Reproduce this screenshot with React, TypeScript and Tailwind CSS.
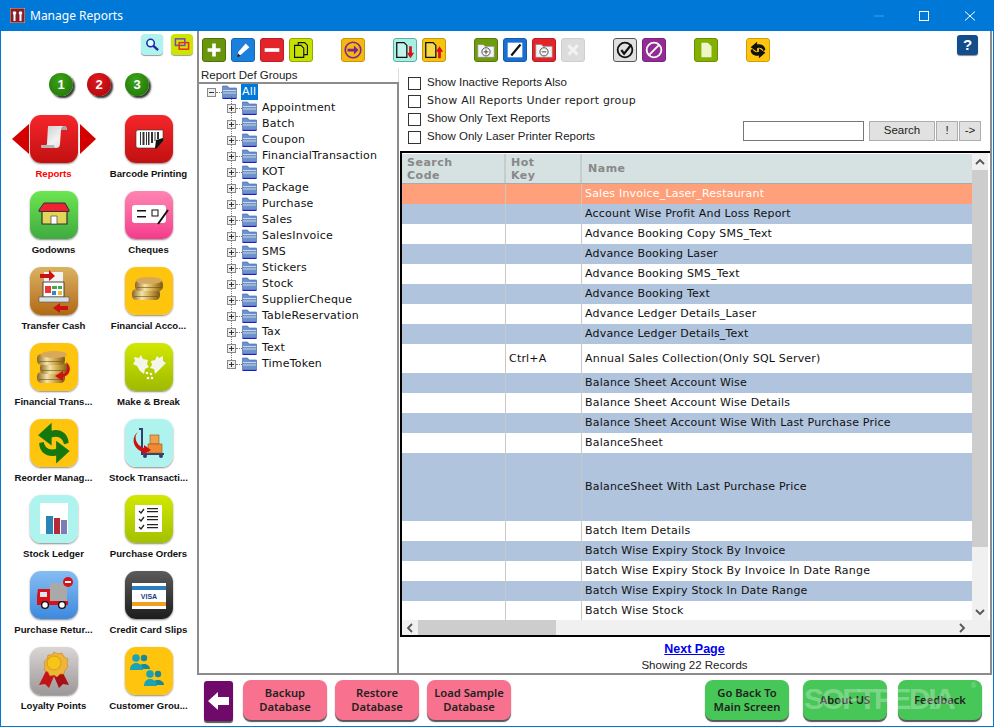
import type { ReactNode } from 'react'

const Ico = ({ children, box = 48 }: { children: ReactNode; box?: number }) => (
  <svg viewBox={`0 0 ${box} ${box}`} className="w-full h-full block">
    {children}
  </svg>
)

const Coins = ({ y = 0, n = 2 }: { y?: number; n?: number }) => (
  <g>
    <defs>
      <linearGradient id="gold" x1="0" x2="1" y1="0" y2="0">
        <stop offset="0" stopColor="#8a6520" />
        <stop offset=".35" stopColor="#f5e3a8" />
        <stop offset=".7" stopColor="#c39a3c" />
        <stop offset="1" stopColor="#7a5818" />
      </linearGradient>
    </defs>
    {Array.from({ length: n }).map((_, i) => {
      const top = y + (n - 1 - i) * 9
      return (
        <g key={i}>
          <rect x={i % 2 ? 11 : 8} y={top + 3} width="28" height="11" rx="4.500" fill="url(#gold)" />
          <rect x={i % 2 ? 13 : 10} y={top + 10} width="24" height="1" fill="#6e4f14" opacity=".6" />
        </g>
      )
    })}
    <ellipse cx="25" cy={y + 3.500} rx="13" ry="3.500" fill="#d9a95a" />
  </g>
)

const People = ({ x, y }: { x: number; y: number }) => (
  <g transform={`translate(${x} ${y})`} fill="#1aa3b5">
    <circle cx="14" cy="4" r="3.200" fill="#158a9c" />
    <path d="M9 15c0-4 2-5 5-5s6 2 6 5z" fill="#158a9c" />
    <circle cx="6" cy="4" r="3.800" />
    <path d="M0 16c0-5 3-7 6-7s7 2 7 7z" />
  </g>
)

const icons: Record<string, ReactNode> = {
  reports: (
    <Ico>
      <defs>
        <linearGradient id="paper" x1="0" x2="1" y1="0" y2="1">
          <stop offset="0" stopColor="#c8c8c8" />
          <stop offset=".6" stopColor="#f2f2f2" />
          <stop offset="1" stopColor="#d8d8d8" />
        </linearGradient>
      </defs>
      <path d="M18 11h16c2 0 3 2 3 4h-6l-1 14c0 3-2 4-4 4H13c-2 0-2-2-2-3h5c1 0 1-1 1-2z" fill="url(#paper)" />
      <path d="M31 15h6c0-2-1-4-3-4s-3 2-3 4z" fill="#a5a5a5" />
      <path d="M11 30h13c0 1 1 3 2 3H13c-2 0-2-2-2-3z" fill="#b5b5b5" />
    </Ico>
  ),
  barcode: (
    <Ico>
      <path d="M13 15h25v11l-7 7H13a2 2 0 0 1-2-2V17a2 2 0 0 1 2-2z" fill="#fff" stroke="#333" strokeWidth=".6" />
      <path d="M15 17h1v13h-1zM17.500 17h2v13h-2zM21 17h1v13h-1zM23 17h1.500v13H23zM26 17h2v11h-2zM29.500 17h1v9h-1zM32 17h2v7h-2z" fill="#333" />
      <path d="M38 23v3l-7 8-1-1 1-8z" fill="#111" />
    </Ico>
  ),
  godowns: (
    <Ico>
      <path d="M12 20h25v13H12z" fill="#e3d45a" stroke="#333" strokeWidth="1.200" />
      <path d="M14 12h21l4 7v1.500H9V19z" fill="#ee2233" stroke="#333" strokeWidth="1" />
      <path d="M21 25h6v8h-6z" fill="#fff" stroke="#555" strokeWidth=".8" />
    </Ico>
  ),
  cheques: (
    <Ico>
      <rect x="7" y="14" width="34" height="18" rx="3" fill="#fff" />
      <path d="M12 19h9v1.400h-9zM12 25h9v1.400h-9z" fill="#111" />
      <rect x="27" y="19" width="6" height="6" fill="#fff" stroke="#111" />
      <path d="M33 33l10-14" stroke="#111" strokeWidth="2" />
    </Ico>
  ),
  transfer: (
    <Ico>
      <path d="M14 5h19v27H14z" fill="#f3f3f3" />
      <path d="M13 15h21v15H13z" fill="#fff" stroke="#444" />
      <rect x="15" y="19" width="6" height="7" fill="#e33" />
      <rect x="22" y="19" width="5" height="3" fill="#4a4" />
      <rect x="28" y="19" width="4" height="3" fill="#4a4" />
      <rect x="22" y="24" width="4" height="4" fill="#38c" />
      <rect x="28" y="24" width="4" height="4" fill="#eb3" />
      <rect x="9" y="30" width="30" height="5" fill="#d8e2e6" stroke="#555" strokeWidth=".6" />
      <path d="M10 7h9V3l6 6-6 5v-3h-9z" fill="#c11" />
      <path d="M38 39h-8v-3l-7 5 7 5v-3h8z" fill="#c11" />
    </Ico>
  ),
  finacc: (
    <Ico>
      <g transform="translate(-1 10)">
        <Coins n={2} />
      </g>
    </Ico>
  ),
  fintrans: (
    <Ico>
      <g transform="translate(-1 8)">
        <Coins n={3} />
      </g>
      <path d="M36 19c6 4 5 13-3 15v4l-8-5 8-5v3c4-1 5-7 3-12z" fill="#c11" />
    </Ico>
  ),
  makebreak: (
    <Ico>
      <path d="M9 14l5 1 2-3 2 4 5 1-1 4 2 3-4 2-1 5-4-3-3-5-4-2 2-3z" fill="#f4f6ea" />
      <path d="M38 13l-4 2-2-2-2 4-4 1 1 4-2 3 4 1 1 5 4-4 4-4 3-3-3-2z" fill="#f4f6ea" />
      <circle cx="22" cy="30" r="1.300" fill="#fff" />
      <circle cx="26" cy="31" r="1.300" fill="#fff" />
      <circle cx="23" cy="35" r="1.300" fill="#fff" />
      <circle cx="27" cy="35" r="1.300" fill="#fff" />
    </Ico>
  ),
  reorder: (
    <Ico>
      <g transform="translate(48 0) scale(-1 1) translate(-3 -3) scale(1.130)">
        <path d="M11 24c0-9 8-13 15-11V6l12 11-12 9v-7c-6-2-10 1-11 6z" fill="#14780f" />
        <path d="M37 24c0 9-8 13-15 11v7L10 31l12-9v7c6 2 10-1 11-6z" fill="#14780f" />
      </g>
    </Ico>
  ),
  stocktrans: (
    <Ico>
      <path d="M14 10h3v25h22" stroke="#33406e" strokeWidth="2" fill="none" />
      <rect x="25" y="16" width="9" height="9" fill="#f0a24a" stroke="#8a5a22" strokeWidth=".6" />
      <rect x="23" y="25" width="14" height="9" fill="#ee8a33" stroke="#8a5a22" strokeWidth=".6" />
      <circle cx="20" cy="37" r="2" fill="#33406e" />
      <circle cx="36" cy="37" r="2" fill="#33406e" />
      <path d="M14 12c-6 4-4 14 5 17v-3l7 5-8 5v-3C8 30 5 18 14 12z" fill="#c11" />
    </Ico>
  ),
  ledger: (
    <Ico>
      <rect x="10" y="8" width="28" height="31" fill="#fff" />
      <rect x="16" y="21" width="7" height="18" fill="#2a82b5" />
      <rect x="24" y="23" width="6" height="16" fill="#b52a35" />
      <rect x="31" y="25" width="6" height="14" fill="#7d7db5" />
    </Ico>
  ),
  orders: (
    <Ico>
      <rect x="10" y="10" width="27" height="27" fill="#fff" />
      <path d="M22 13h11v1.300H22zM22 16h11v1.300H22zM22 21h11v1.300H22zM22 24h11v1.300H22zM22 29h11v1.300H22zM22 32h11v1.300H22z" fill="#222" />
      <path d="M14 16l2 2 3-4M14 24l2 2 3-4M14 32l2 2 3-4" stroke="#222" strokeWidth="1.300" fill="none" />
    </Ico>
  ),
  returns: (
    <Ico>
      <path d="M20 12h17v18H20z" fill="#a9a9a9" />
      <path d="M8 18h12v16H7v-9z" fill="#d8101a" />
      <path d="M10 21h7v5h-7z" fill="#dfe6ee" />
      <path d="M7 30h31v4H7z" fill="#d8101a" />
      <circle cx="15" cy="34" r="3.400" fill="#fff" stroke="#111" strokeWidth="1.400" />
      <circle cx="32" cy="34" r="3.400" fill="#fff" stroke="#111" strokeWidth="1.400" />
      <circle cx="38" cy="11" r="5" fill="#d8101a" />
      <rect x="35" y="10" width="6" height="2" fill="#fff" />
    </Ico>
  ),
  credit: (
    <Ico>
      <rect x="7" y="12" width="34" height="26" fill="#fff" />
      <rect x="7" y="15" width="34" height="4" fill="#2a7ec0" />
      <rect x="7" y="31" width="34" height="4" fill="#f0a020" />
      <text x="24" y="28" textAnchor="middle" fontSize="7" fontWeight="700" fontFamily="Liberation Sans, sans-serif" fill="#1a3a8a">
        VISA
      </text>
    </Ico>
  ),
  loyalty: (
    <Ico>
      <path d="M17 22L9 38l6-1 4 4 6-14z" fill="#c4141a" />
      <path d="M31 22l8 16-6-1-4 4-6-14z" fill="#a81015" />
      <path d="M24 5l4 2 4-1 2 4 4 2-1 4 1 4-3 3-1 4-4 0-3 3-3-2-4 1-2-4-4-2 1-4-1-4 3-3 1-4 4 0z" fill="#f0b438" stroke="#c5871a" strokeWidth=".6" />
      <circle cx="24" cy="16" r="7" fill="#f5c518" stroke="#d89a1c" />
    </Ico>
  ),
  groups: (
    <Ico>
      <People x={5} y={7} />
      <People x={19} y={23} />
    </Ico>
  ),
}

const tiles = [
  { label: 'Reports', icon: 'reports', bg: 'from-[#f5262b] to-[#c20f0f]', active: true },
  { label: 'Barcode Printing', icon: 'barcode', bg: 'from-[#f5262b] to-[#c20f0f]' },
  { label: 'Godowns', icon: 'godowns', bg: 'from-[#6ce64f] to-[#3fab40]' },
  { label: 'Cheques', icon: 'cheques', bg: 'from-[#ff84b2] to-[#f43a8c]' },
  { label: 'Transfer Cash', icon: 'transfer', bg: 'from-[#d9b361] to-[#b2690f]' },
  { label: 'Financial Acco...', icon: 'finacc', bg: 'from-[#ffc40d] to-[#ffc40d]' },
  { label: 'Financial Trans...', icon: 'fintrans', bg: 'from-[#ffc40d] to-[#ffc40d]' },
  { label: 'Make & Break', icon: 'makebreak', bg: 'from-[#d2e800] to-[#9dba00]' },
  { label: 'Reorder Manag...', icon: 'reorder', bg: 'from-[#ffc40d] to-[#ffc40d]' },
  { label: 'Stock Transacti...', icon: 'stocktrans', bg: 'from-[#aff3ee] to-[#aff3ee]' },
  { label: 'Stock Ledger', icon: 'ledger', bg: 'from-[#aff3ee] to-[#aff3ee]' },
  { label: 'Purchase Orders', icon: 'orders', bg: 'from-[#d2e800] to-[#a3c000]' },
  { label: 'Purchase Retur...', icon: 'returns', bg: 'from-[#85bdf3] to-[#3d89dd]' },
  { label: 'Credit Card Slips', icon: 'credit', bg: 'from-[#5c5c5c] to-[#1d1d1d]' },
  { label: 'Loyalty Points', icon: 'loyalty', bg: 'from-[#dad6d6] to-[#9d9797]' },
  { label: 'Customer Grou...', icon: 'groups', bg: 'from-[#ffc40d] to-[#ffc40d]' },
]

function Sidebar() {
  return (
    <div className="w-[196px] shrink-0 pt-[3px]">
      <div className="flex justify-end gap-[8px] pr-[4px] h-[21px]">
        <div className="w-[22px] h-[21px] rounded-[4px] bg-[#aff3ee] shadow-[0_1px_1px_#999] p-[3px]">
          <Ico box={16}>
            <circle cx="6.500" cy="6.500" r="4" fill="#dff" stroke="#2222aa" strokeWidth="1.600" />
            <path d="M9.500 9.500l5 4.500" stroke="#2222aa" strokeWidth="2.400" />
          </Ico>
        </div>
        <div className="w-[22px] h-[21px] rounded-[4px] bg-[#cfe500] shadow-[0_1px_1px_#999] p-[3px]">
          <Ico box={16}>
            <rect x="1" y="2" width="10" height="7" fill="none" stroke="#6a4bc4" strokeWidth="1.600" />
            <rect x="5" y="6" width="10" height="7" fill="none" stroke="#ee2a1a" strokeWidth="1.600" />
          </Ico>
        </div>
      </div>
      <div className="flex justify-center gap-[14px] mt-[18px] h-[24px]">
        {['1', '2', '3'].map((n, i) => (
          <div
            key={n}
            className={`w-[24px] h-[23px] rounded-full flex items-center justify-center text-white text-[13px] font-bold shadow-[2px_2px_2px_#333] font-['Liberation_Sans',sans-serif] bg-radial-[at_45%_30%] ${
              i === 1 ? 'from-[#e01a20] to-[#a80408]' : 'from-[#3da31a] to-[#1d7005]'
            }`}
          >
            {n}
          </div>
        ))}
      </div>
      <div className="grid grid-cols-[95px_95px] pl-[5px] mt-[18px] auto-rows-[76px]">
        {tiles.map(t => (
          <div key={t.label} className="relative flex flex-col items-center">
            <div
              className={`w-[48px] h-[48px] rounded-[11px] bg-gradient-to-b overflow-hidden shadow-[0_1px_2px_#888] ${t.bg}`}
            >
              {icons[t.icon]}
            </div>
            {t.active && (
              <>
                <div className="absolute left-[6px] top-[9px] w-0 h-0 border-y-[15px] border-y-transparent border-r-[17px] border-r-[#d40000]" />
                <div className="absolute left-[74px] top-[9px] w-0 h-0 border-y-[15px] border-y-transparent border-l-[16px] border-l-[#d40000]" />
              </>
            )}
            <div
              className={`mt-[4px] text-[9.600px] leading-[13px] font-bold whitespace-nowrap font-['Liberation_Sans',sans-serif] ${
                t.active ? 'text-[#ff0000]' : 'text-[#111]'
              }`}
            >
              {t.label}
            </div>
          </div>
        ))}
      </div>
    </div>
  )
}

const Tool = ({ bg, children, gap }: { bg: string; children: ReactNode; gap?: boolean }) => (
  <div className={`w-[24px] h-[24px] rounded-[3px] border overflow-hidden shrink-0 ${bg} ${gap ? 'ml-[28px]' : 'ml-[5px]'}`}>
    <Ico box={24}>{children}</Ico>
  </div>
)

const DocGlyph = ({ fill }: { fill: string }) => (
  <path d="M3 4h8l3 3v13H3z" fill={fill} stroke="#111" strokeWidth="1.400" />
)

const FolderGlyph = () => (
  <g>
    <path d="M3 6h6l2 2h10v12H3z" fill="#f4f4f4" stroke="#888" strokeWidth=".8" />
    <circle cx="12" cy="14" r="4.500" fill="none" stroke="#333" strokeWidth=".9" />
  </g>
)

function Toolbar() {
  return (
    <div className="h-[37px] flex items-start pt-[7px]">
      <Tool bg="bg-[#68950b] border-[#4d7206] !ml-[3px]">
        <path d="M10 5h4v5h5v4h-5v5h-4v-5H5v-4h5z" fill="#fff" />
      </Tool>
      <Tool bg="bg-[#1a80dc] border-[#1567b3]">
        <path d="M5 20l2-6 8-9 4 4-9 8z" fill="#fff" />
        <path d="M5 20l1.500-4.500 3 3z" fill="#222" />
      </Tool>
      <Tool bg="bg-[#e4242b] border-[#b91c22]">
        <rect x="4" y="10" width="16" height="4" fill="#fff" />
      </Tool>
      <Tool bg="bg-[#c6e000] border-[#93a800]">
        <path d="M9 4h7l3 3v10H9z" fill="none" stroke="#111" strokeWidth="1.200" />
        <path d="M5 7h7l3 3v10H5z" fill="#c6e000" stroke="#111" strokeWidth="1.200" />
      </Tool>
      <Tool gap bg="bg-[#f5b80f] border-[#c99708]">
        <circle cx="12" cy="12" r="8.500" fill="none" stroke="#7b2590" strokeWidth="1.800" />
        <path d="M6 10.500h7V7l5 5-5 5v-3.500H6z" fill="#7b2590" />
      </Tool>
      <Tool gap bg="bg-[#a8f0e4] border-[#5cb0a2]">
        <DocGlyph fill="#bff5ec" />
        <path d="M16.500 8h3v7h2.500l-4 6-4-6h2.500z" fill="#d8101a" />
      </Tool>
      <Tool bg="bg-[#f5c40f] border-[#c99708]">
        <DocGlyph fill="#f5d94a" />
        <path d="M16.500 21h3v-7h2.500l-4-6-4 6h2.500z" fill="#d8101a" />
      </Tool>
      <Tool gap bg="bg-[#6e9c0c] border-[#557a08]">
        <FolderGlyph />
        <path d="M9.500 14h5M12 11.500v5" stroke="#333" strokeWidth=".9" />
      </Tool>
      <Tool bg="bg-[#1a70d0] border-[#155cad]">
        <rect x="4" y="4" width="16" height="16" fill="#fff" />
        <path d="M8 18L18 6" stroke="#111" strokeWidth="2.400" />
      </Tool>
      <Tool bg="bg-[#e4242b] border-[#b91c22]">
        <FolderGlyph />
        <path d="M9.500 14h5" stroke="#333" strokeWidth=".9" />
      </Tool>
      <Tool bg="bg-[#dcdcdc] border-[#cfcfcf]">
        <path d="M7 7l10 10M17 7L7 17" stroke="#f2f2f2" strokeWidth="3.400" />
      </Tool>
      <Tool gap bg="bg-[#e0e0e0] border-[#555]">
        <circle cx="12" cy="12" r="8" fill="none" stroke="#111" strokeWidth="2" />
        <path d="M8 12l3 4 8-10" fill="none" stroke="#111" strokeWidth="2.400" />
      </Tool>
      <Tool bg="bg-[#932b94] border-[#7b2280]">
        <circle cx="12" cy="12" r="8" fill="none" stroke="#fff" strokeWidth="2" />
        <path d="M7 17L17 7" stroke="#fff" strokeWidth="2" />
      </Tool>
      <Tool gap bg="bg-[#84b000] border-[#6a8e00]">
        <path d="M7 4h7l4 4v12H7z" fill="#eef5c8" />
      </Tool>
      <Tool gap bg="bg-[#ffc40d] border-[#d09e08]">
        <g transform="translate(24 0) scale(-1 1)">
          <path d="M4 12c0-5 5-7 9-6V3l7 6-7 5v-4c-3-1-6 0-7 3z" fill="#111" />
          <path d="M20 12c0 5-5 7-9 6v3l-7-6 7-5v4c3 1 6 0 7-3z" fill="#111" />
        </g>
      </Tool>
      <div className="ml-[187px] -mt-[3px] w-[21px] h-[20px] rounded-[3px] bg-[#144d8c] shadow-[0_1px_1px_#888] flex items-center justify-center text-white text-[15px] font-bold font-['Liberation_Sans',sans-serif]">
        ?
      </div>
    </div>
  )
}

const groups = [
  'Appointment', 'Batch', 'Coupon', 'FinancialTransaction', 'KOT', 'Package', 'Purchase', 'Sales',
  'SalesInvoice', 'SMS', 'Stickers', 'Stock', 'SupplierCheque', 'TableReservation', 'Tax', 'Text', 'TimeToken',
]

const FolderIcon = () => (
  <svg viewBox="0 0 15 14" className="w-[15px] h-[14px] shrink-0">
    <path d="M0.500 1h5l1.500 2h7.500v10H0.500z" fill="#6f93c8" stroke="#3a5fa8" strokeWidth=".6" />
    <path d="M1 5.500h13M1 8h13" stroke="#c8d8ea" strokeWidth="1" />
    <path d="M0.500 13.500h14" stroke="#1a1ad0" strokeWidth="1" />
  </svg>
)

const Expander = ({ open }: { open?: boolean }) => (
  <div className="w-[9px] h-[9px] border border-[#8a8a8a] bg-[#eee] relative shrink-0 z-10">
    <div className="absolute left-[1px] top-[3px] w-[5px] h-px bg-[#333]" />
    {!open && <div className="absolute left-[3px] top-[1px] w-px h-[5px] bg-[#333]" />}
  </div>
)

function Tree() {
  return (
    <div className="w-[200px] shrink-0 flex flex-col">
      <div className="h-[14px] text-[11.500px] leading-[14px] pl-[2px] text-[#222] border-r border-[#ddd] font-['Liberation_Sans',sans-serif] whitespace-nowrap">
        Report Def Groups
      </div>
      <div className="flex-1 border-t-2 border-r-2 border-[#8c8c8c] font-['DejaVu_Sans',sans-serif] text-[11px] tracking-[0.2px] text-[#111]">
        <div className="flex items-center h-[16px] pl-[8px]">
          <Expander open />
          <div className="w-[6px] border-t border-dotted border-[#777]" />
          <FolderIcon />
          <div className="ml-[4px] px-[1px] h-[16px] w-[17px] bg-[#0078d7] text-white leading-[16px]">All</div>
        </div>
        <div className="relative">
          <div className="absolute left-[32px] -top-[4px] bottom-[8px] border-l border-dotted border-[#777]" />
          {groups.map(g => (
            <div key={g} className="relative flex items-center h-[16px] pl-[28px]">
              <Expander />
              <div className="w-[6px] border-t border-dotted border-[#777]" />
              <FolderIcon />
              <span className="ml-[5px] whitespace-nowrap">{g}</span>
            </div>
          ))}
        </div>
      </div>
    </div>
  )
}

const rows: { name: string; key?: string; h: string; bg: string; selected?: boolean }[] = [
  { name: 'Sales Invoice_Laser_Restaurant', h: 'h-[20px]', bg: 'bg-[#ffa07a]', selected: true },
  { name: 'Account Wise Profit And Loss Report', h: 'h-[20px]', bg: 'bg-[#b0c4de]' },
  { name: 'Advance Booking Copy SMS_Text', h: 'h-[20px]', bg: 'bg-white' },
  { name: 'Advance Booking Laser', h: 'h-[20px]', bg: 'bg-[#b0c4de]' },
  { name: 'Advance Booking SMS_Text', h: 'h-[20px]', bg: 'bg-white' },
  { name: 'Advance Booking Text', h: 'h-[20px]', bg: 'bg-[#b0c4de]' },
  { name: 'Advance Ledger Details_Laser', h: 'h-[20px]', bg: 'bg-white' },
  { name: 'Advance Ledger Details_Text', h: 'h-[20px]', bg: 'bg-[#b0c4de]' },
  { name: 'Annual Sales Collection(Only SQL Server)', key: 'Ctrl+A', h: 'h-[29px]', bg: 'bg-white' },
  { name: 'Balance Sheet Account Wise', h: 'h-[20px]', bg: 'bg-[#b0c4de]' },
  { name: 'Balance Sheet Account Wise Details', h: 'h-[20px]', bg: 'bg-white' },
  { name: 'Balance Sheet Account Wise With Last Purchase Price', h: 'h-[20px]', bg: 'bg-[#b0c4de]' },
  { name: 'BalanceSheet', h: 'h-[20px]', bg: 'bg-white' },
  { name: 'BalanceSheet With Last Purchase Price', h: 'h-[68px]', bg: 'bg-[#b0c4de]' },
  { name: 'Batch Item Details', h: 'h-[20px]', bg: 'bg-white' },
  { name: 'Batch Wise Expiry Stock By Invoice', h: 'h-[20px]', bg: 'bg-[#b0c4de]' },
  { name: 'Batch Wise Expiry Stock By Invoice In Date Range', h: 'h-[20px]', bg: 'bg-white' },
  { name: 'Batch Wise Expiry Stock In Date Range', h: 'h-[20px]', bg: 'bg-[#b0c4de]' },
  { name: 'Batch Wise Stock', h: 'h-[20px]', bg: 'bg-white' },
]

const Chevron = ({ d }: { d: string }) => (
  <svg viewBox="0 0 10 10" className="w-[10px] h-[10px]">
    <path d={d} fill="none" stroke="#555" strokeWidth="1.800" />
  </svg>
)

function ReportGrid() {
  return (
    <div className="ml-[1px] w-[590px] h-[486px] border-y-2 border-l-2 border-black bg-white flex flex-col font-['DejaVu_Sans',sans-serif] text-[11px] tracking-[0.2px] overflow-hidden">
      <div className="flex h-[467px] pr-[2px]">
        <div className="w-[570px] overflow-hidden bg-white pt-px">
          <div className="flex h-[30px] bg-[#d6e1e1] border-b border-[#aaa] text-[#888] font-bold leading-[13px] tracking-[0.5px]">
            <div className="w-[104px] pl-[5px] flex items-center border-r-2 border-[#c4cccc]">Search<br />Code</div>
            <div className="w-[76px] pl-[5px] flex items-center border-r-2 border-[#c4cccc]">Hot<br />Key</div>
            <div className="flex-1 pl-[6px] flex items-center">Name</div>
          </div>
          {rows.map(r => (
            <div key={r.name} className={`flex ${r.h} ${r.bg} ${r.selected ? 'text-white' : 'text-[#111]'}`}>
              <div className="w-[104px] border-r border-[#c8c8c8]" />
              <div className="w-[76px] pl-[3px] pt-px flex items-center border-r border-[#c8c8c8] whitespace-nowrap">{r.key}</div>
              <div className="flex-1 pl-[3px] pt-px flex items-center whitespace-nowrap">{r.name}</div>
            </div>
          ))}
        </div>
        <div className="flex-1 flex flex-col items-center bg-[#f0f0f0]">
          <div className="h-[17px] flex items-center"><Chevron d="M1 7l4-4 4 4" /></div>
          <div className="w-full h-[377px] bg-[#cdcdcd]" />
          <div className="flex-1" />
          <div className="h-[17px] flex items-center"><Chevron d="M1 3l4 4 4-4" /></div>
        </div>
      </div>
      <div className="h-[17px] flex items-center bg-[#f0f0f0]">
        <div className="w-[16px] flex justify-center"><Chevron d="M7 1L3 5l4 4" /></div>
        <div className="w-[138px] h-full bg-[#cdcdcd]" />
        <div className="flex-1" />
        <div className="w-[16px] flex justify-center mr-[20px]"><Chevron d="M3 1l4 4-4 4" /></div>
      </div>
    </div>
  )
}

function Options() {
  const opts = [
    { t: 'Show Inactive Reports Also', c: "font-['Liberation_Sans',sans-serif] text-[11.500px]" },
    { t: 'Show All Reports Under report group', c: "font-['DejaVu_Sans',sans-serif] text-[11px] tracking-[0.2px]" },
    { t: 'Show Only Text Reports', c: "font-['Liberation_Sans',sans-serif] text-[11.500px]" },
    { t: 'Show Only Laser Printer Reports', c: "font-['Liberation_Sans',sans-serif] text-[11.500px]" },
  ]
  return (
    <div className="flex justify-between h-[83px] pt-[6px] pl-[9px] pr-[9px]">
      <div>
        {opts.map(o => (
          <div key={o.t} className="flex items-center h-[18px] gap-[6px]">
            <div className="w-[13px] h-[13px] border border-[#333] bg-white" />
            <span className={`${o.c} text-[#222] whitespace-nowrap`}>{o.t}</span>
          </div>
        ))}
      </div>
      <div className="flex items-start pt-[47px] gap-[5px] font-['Liberation_Sans',sans-serif] text-[11.500px] text-[#222]">
        <div className="w-[121px] h-[20px] border border-[#777] bg-white" />
        <div className="flex gap-[1px]">
          <div className="w-[66px] h-[20px] border border-[#adadad] bg-[#e1e1e1] flex items-center justify-center">Search</div>
          <div className="w-[22px] h-[20px] border border-[#adadad] bg-[#e1e1e1] flex items-center justify-center">!</div>
          <div className="w-[22px] h-[20px] border border-[#adadad] bg-[#e1e1e1] flex items-center justify-center">-&gt;</div>
        </div>
      </div>
    </div>
  )
}

const PillBtn = ({ color, children }: { color: string; children: ReactNode }) => (
  <div
    className={`w-[84px] h-[40px] rounded-[8px] ${color} shadow-[0_2px_1px_#555] flex items-center justify-center text-center text-[11.200px] leading-[14px] font-semibold text-[#222] font-['Noto_Sans',sans-serif]`}
  >
    {children}
  </div>
)

function BottomBar() {
  return (
    <div className="relative h-[50px] flex items-start pt-[5px] pl-[7px]">
      <div className="w-[29px] h-[40px] rounded-[3px] bg-[#6f0a6b] shadow-[0_2px_1px_#555] mt-[1px] p-[4px] flex items-center">
        <svg viewBox="0 0 21 20" className="w-full">
          <path d="M0 10L10 1v5h11v8H10v5z" fill="#fff" />
        </svg>
      </div>
      <div className="flex gap-[8px] ml-[10px]">
        <PillBtn color="bg-[#f8728f]">Backup<br />Database</PillBtn>
        <PillBtn color="bg-[#f8728f]">Restore<br />Database</PillBtn>
        <PillBtn color="bg-[#f8728f]">Load Sample<br />Database</PillBtn>
      </div>
      <div className="flex ml-[194px]">
        <PillBtn color="bg-[#47c757]">Go Back To<br />Main Screen</PillBtn>
        <div className="ml-[14px]"><PillBtn color="bg-[#47c757]">About US</PillBtn></div>
        <div className="ml-[11px]"><PillBtn color="bg-[#47c757]">Feedback</PillBtn></div>
      </div>
      <div className="absolute left-[607px] top-[8px] text-white/30 font-bold text-[30px] leading-[32px] tracking-[-2.500px] whitespace-nowrap font-['Liberation_Sans',sans-serif]">
        SOFTPEDIA
      </div>
      <div className="absolute left-[774px] top-[7px] text-white/40 text-[7px] leading-[8px] font-['Liberation_Sans',sans-serif]">®</div>
    </div>
  )
}

export default function App() {
  return (
    <div className="w-[994px] h-[727px] flex flex-col bg-white border-x border-b border-[#0078d7] overflow-hidden">
      <div className="h-[31px] -mx-px bg-[#0078d7] flex items-center pl-[10px] text-white shrink-0">
        <svg viewBox="0 0 15 15" className="w-[15px] h-[15px]">
          <rect width="15" height="15" fill="#8c1c2c" stroke="#d8c080" strokeWidth="1" />
          <circle cx="4.500" cy="5" r="1.800" fill="#fff" />
          <rect x="3.500" y="5" width="2" height="8" fill="#fff" />
          <circle cx="10.500" cy="5" r="1.800" fill="#fff" />
          <rect x="9.500" y="5" width="2" height="8" fill="#fff" />
        </svg>
        <span className="ml-[5px] text-[12px] font-['Noto_Sans',sans-serif]">Manage Reports</span>
        <svg viewBox="0 0 110 12" className="w-[110px] h-[12px] ml-auto mr-[10px]">
          <path d="M0 6h10" stroke="#4a9fe4" />
          <rect x="45.500" y="1.500" width="9" height="9" fill="none" stroke="#fff" />
          <path d="M91 1.500l10 9M101 1.500l-10 9" stroke="#fff" />
        </svg>
      </div>
      <div className="flex flex-1 min-h-0">
        <Sidebar />
        <div className="flex-1 flex flex-col min-w-0">
          <div className="h-[644px] w-[795px] border-l-2 border-r-2 border-b-2 border-[#8c8c8c] flex flex-col">
            <Toolbar />
            <div className="flex flex-1 min-h-0">
              <Tree />
              <div className="flex-1 flex flex-col min-w-0">
                <Options />
                <ReportGrid />
                <div className="flex flex-col items-center pt-[4px] text-[#222]">
                  <span className="text-[12.500px] leading-[16px] font-bold underline text-[#0000ee] font-['Liberation_Sans',sans-serif]">Next Page</span>
                  <span className="text-[11.500px] leading-[16px] font-['Liberation_Sans',sans-serif]">Showing 22 Records</span>
                </div>
              </div>
            </div>
          </div>
          <BottomBar />
        </div>
      </div>
    </div>
  )
}
